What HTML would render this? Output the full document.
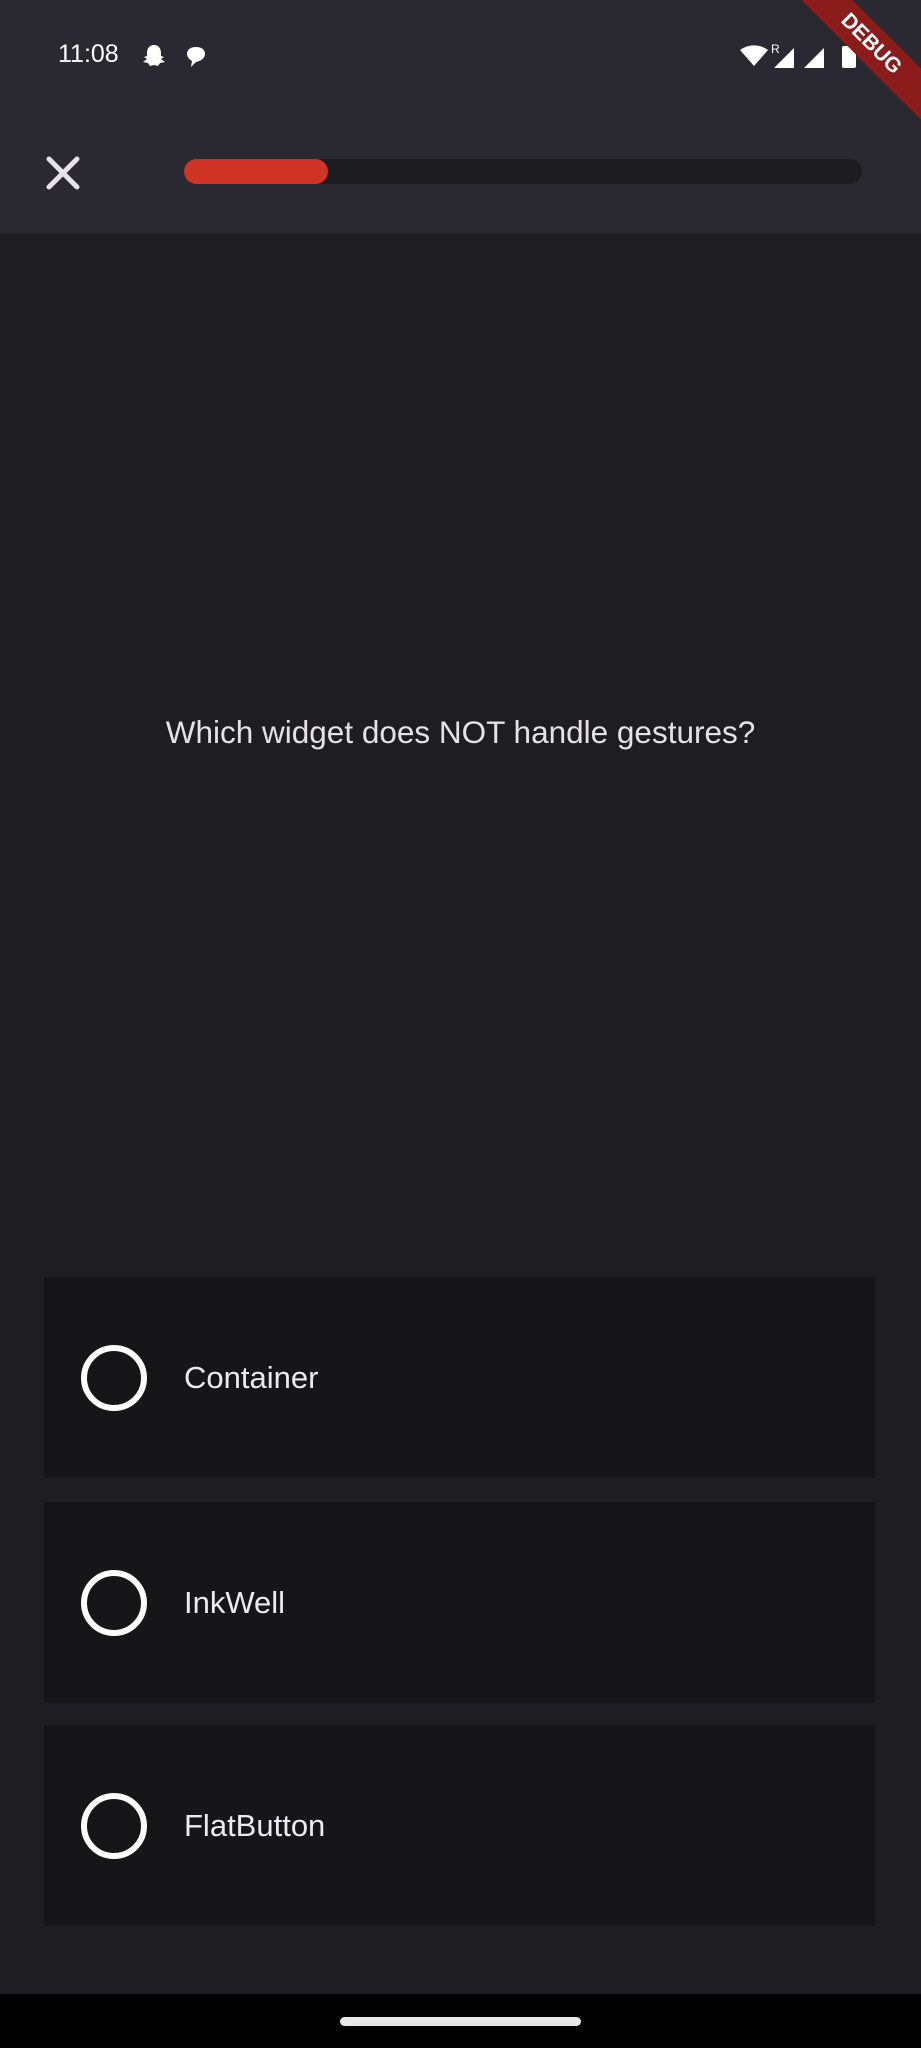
<!DOCTYPE html>
<html><head><meta charset="utf-8"><style>
html,body{margin:0;padding:0}
body{width:921px;height:2048px;background:#1e1d22;position:relative;overflow:hidden;font-family:"Liberation Sans",sans-serif;color:#e6e4ea}
.hdr{position:absolute;left:0;top:0;width:921px;height:234px;background:#2a2831}
.time{position:absolute;left:58px;top:40px;font-size:25px;color:#fff}
.bar{position:absolute;left:184px;top:159px;width:678px;height:25px;border-radius:13px;background:#1d1c21}
.fill{position:absolute;left:0;top:0;width:144px;height:25px;border-radius:13px;background:#cf3424}
.q{position:absolute;left:0;width:921px;top:714px;text-align:center;font-size:31.5px;color:#e4e2e8}
.card{position:absolute;left:44px;width:831px;height:201px;background:#161619}
.card .c{position:absolute;left:37px;top:68px;width:66px;height:66px;border:6px solid #fff;border-radius:50%;box-sizing:border-box}
.card .t{position:absolute;left:140px;top:83px;font-size:31px;color:#eceaf0}
.nav{position:absolute;left:0;top:1994px;width:921px;height:54px;background:#000}
.pill{position:absolute;left:340px;top:2017px;width:241px;height:9px;border-radius:5px;background:#e8e8e8}
.ribbon{position:absolute;right:-70px;top:26px;width:240px;height:36px;background:#8b1c1c;transform:rotate(45deg);color:#fff;font-weight:bold;font-size:21px;text-align:center;line-height:36px}
</style></head><body>
<div class="hdr">
<div class="time">11:08</div>
<svg style="position:absolute;left:140px;top:42px" width="70" height="28"><path d="M14 3c-5 0-7 4-7 8v3l-3 1 3 2-4 3 5 1 2 3 4-1 4 1 2-3 5-1-4-3 3-2-3-1v-3c0-4-2-8-7-8z" fill="#fff"/><path d="M56 5c-6 0-9 3-9 7 0 3 3 6 5 7l-1 6 5-5c5-1 9-4 9-8s-3-7-9-7z" fill="#fff"/></svg>
<svg style="position:absolute;left:738px;top:40px" width="130" height="32"><path d="M2 10a20 16 0 0 1 28 0L16 26z" fill="#fff"/><text x="33" y="13" font-size="12" fill="#fff" font-family="Liberation Sans">R</text><path d="M36 28L56 8v20z" fill="#fff"/><path d="M66 28L86 8v20z" fill="#fff"/><rect x="104" y="6" width="14" height="22" rx="2" fill="#fff"/></svg>
<svg style="position:absolute;left:45px;top:155px" width="36" height="36"><path d="M4 4L32 32M32 4L4 32" stroke="#e6e2ea" stroke-width="5" stroke-linecap="round"/></svg>
<div class="bar"><div class="fill"></div></div>
</div>
<div class="ribbon">DEBUG</div>
<div class="q">Which widget does NOT handle gestures?</div>
<div class="card" style="top:1277px"><div class="c"></div><div class="t">Container</div></div>
<div class="card" style="top:1502px"><div class="c"></div><div class="t">InkWell</div></div>
<div class="card" style="top:1725px"><div class="c"></div><div class="t">FlatButton</div></div>
<div class="nav"></div><div class="pill"></div>
</body></html>
